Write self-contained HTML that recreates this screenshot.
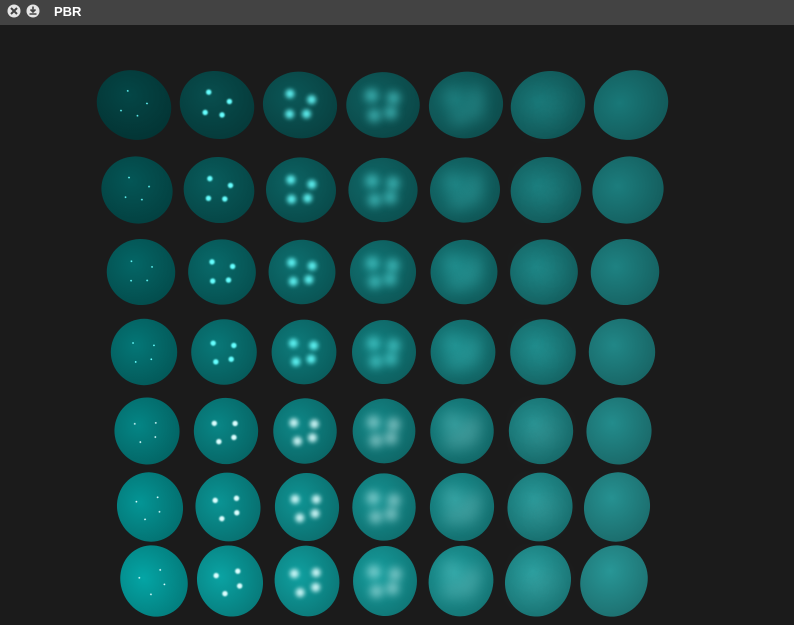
<!DOCTYPE html>
<html><head><meta charset="utf-8"><style>
html,body{margin:0;padding:0;background:#1b1b1b;width:794px;height:625px;overflow:hidden}
#bar{position:absolute;left:0;top:0;width:794px;height:25px;background:#434343}
#t{position:absolute;left:54px;top:4px;font:bold 13px "Liberation Sans",sans-serif;color:#fff}
svg{position:absolute;left:0;top:0}
</style></head><body>
<div id="bar"></div>
<svg width="794" height="25">
<circle cx="14" cy="11" r="6.5" fill="#e6e6e6"/>
<path d="M11 8l6 6M17 8l-6 6" stroke="#434343" stroke-width="2"/>
<circle cx="33" cy="11" r="6.5" fill="#e6e6e6"/>
<path d="M33 6.5v5M30.5 9.5l2.5 2.5 2.5-2.5M29.5 14h7" stroke="#434343" stroke-width="1.6" fill="none"/>
</svg>
<div id="t">PBR</div>
<svg id="s" width="794" height="625" style="top:0"></svg>
<script>
var rows=[[105,[134,217,300,383,466,548,631],35],[190,[137,219,301,383,465,546,628],33.5],[272,[141,222,302,383,464,544,625],32.5],[352,[144,224,304,384,463,543,622],32],[431,[147,226,305,384,462,541,619],32],[507,[150,228,307,384,462,540,617],33],[581,[154,230,307,385,461,538,614],34]];
function mix(a,b,t){return a+(b-a)*t}
var h='<defs>';
for(var r=0;r<7;r++)for(var c=0;c<7;c++){
 var t=r/6,u=c/6;
 var g0=mix(mix(70,165,t),mix(120,150,t),u);
 var rr=mix(4,mix(25,40,t),u);
 var base='rgb('+Math.round(rr)+','+Math.round(g0)+','+Math.round(g0)+')';
 var dark='rgb('+Math.round(rr*0.7)+','+Math.round(g0*0.72)+','+Math.round(g0*0.72)+')';
 h+='<radialGradient id="g'+r+'_'+c+'" cx="0.38" cy="0.4" r="0.75"><stop offset="0" stop-color="'+base+'"/><stop offset="1" stop-color="'+dark+'"/></radialGradient>';
}
for(var c=0;c<7;c++)h+='<filter id="f'+c+'" x="-2" y="-2" width="5" height="5"><feGaussianBlur stdDeviation="'+(0.3+c*c*0.45)+'"/></filter>';
h+='</defs>';
var ops=[1,1,0.9,0.55,0.25,0.1,0];
for(var r=0;r<7;r++){var y=rows[r][0];for(var c=0;c<7;c++){
 var x=rows[r][1][c],rad=rows[r][2]+Math.abs(c-3)*0.4;
 var k=(3-r)/3;
 var rx=rad*(1-0.04*Math.abs(c-3)*(k<0?-k:0)*0+ (k>0?0.05*k:-0.06*(-k))), ry=rad*(1-(k>0?0.06*k:-0.03*(-k)));
 var rot=(c-3)*(r<3?-1:1)*Math.abs(k)*9;
 h+='<g transform="rotate('+rot+' '+x+' '+y+')"><ellipse cx="'+x+'" cy="'+y+'" rx="'+rx+'" ry="'+ry+'" fill="url(#g'+r+'_'+c+')"/>';
 var pts=[[-0.33,-0.27],[0.3,-0.2],[-0.25,0.3],[0.22,0.22]];
 var sz=0.9+c*1.8;
 var col=r<4?'#6ff':'#dff';
 if(c<6)for(var q=0;q<4;q++)h+='<circle cx="'+(x+pts[q][0]*rad)+'" cy="'+(y+pts[q][1]*rad)+'" r="'+sz+'" fill="'+col+'" opacity="'+ops[c]+'" filter="url(#f'+c+')"/>';
 h+='</g>';
}}
document.getElementById('s').innerHTML=h;
</script>
</body></html>
